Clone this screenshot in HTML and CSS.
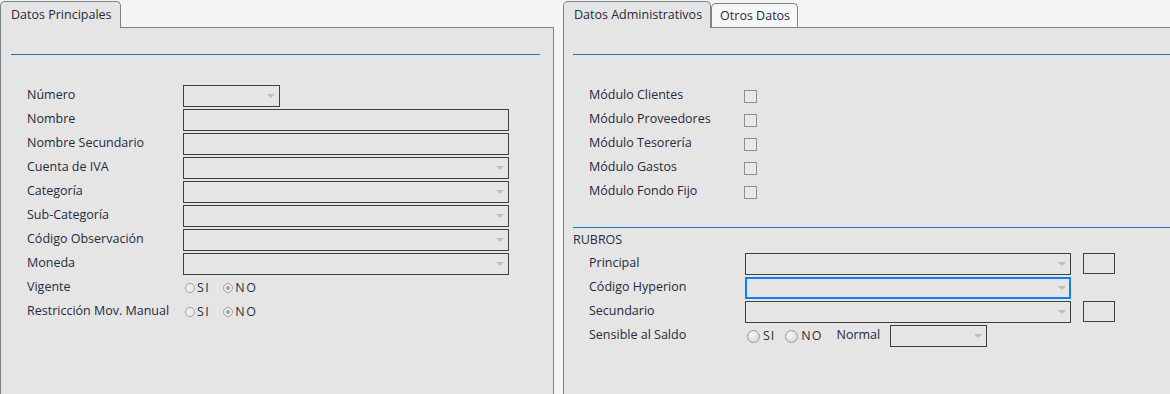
FILE: index.html
```html
<!DOCTYPE html>
<html lang="es">
<head>
<meta charset="utf-8">
<title>Datos</title>
<link rel="stylesheet" href="styles.css">
</head>
<body>
<div class="page">
  <section class="pane pane-left">
    <div class="tabs">
      <div class="tab active">Datos Principales</div>
    </div>
    <div class="panel">
      <div class="rule rule-left"></div>
      <div class="form form-left">
        <span class="label">Número</span>
        <div class="field narrow"><span class="caret"></span></div>
        <span class="label">Nombre</span>
        <div class="field"></div>
        <span class="label">Nombre Secundario</span>
        <div class="field"></div>
        <span class="label">Cuenta de IVA</span>
        <div class="field"><span class="caret"></span></div>
        <span class="label">Categoría</span>
        <div class="field"><span class="caret"></span></div>
        <span class="label">Sub-Categoría</span>
        <div class="field"><span class="caret"></span></div>
        <span class="label">Código Observación</span>
        <div class="field"><span class="caret"></span></div>
        <span class="label">Moneda</span>
        <div class="field"><span class="caret"></span></div>
        <span class="label">Vigente</span>
        <div class="radios">
          <span class="radio"><span class="dot"></span>SI</span>
          <span class="radio"><span class="dot on"></span>NO</span>
        </div>
        <span class="label">Restricción Mov. Manual</span>
        <div class="radios">
          <span class="radio"><span class="dot"></span>SI</span>
          <span class="radio"><span class="dot on"></span>NO</span>
        </div>
      </div>
    </div>
  </section>

  <section class="pane pane-right">
    <div class="tabs">
      <div class="tab active">Datos Administrativos</div>
      <div class="tab inactive">Otros Datos</div>
    </div>
    <div class="panel">
      <div class="rule rule-right"></div>
      <div class="form form-right">
        <span class="label">Módulo Clientes</span>
        <span class="check"></span>
        <span class="label">Módulo Proveedores</span>
        <span class="check"></span>
        <span class="label">Módulo Tesorería</span>
        <span class="check"></span>
        <span class="label">Módulo Gastos</span>
        <span class="check"></span>
        <span class="label">Módulo Fondo Fijo</span>
        <span class="check"></span>
      </div>
      <div class="rule rule-rubros"></div>
      <div class="heading">RUBROS</div>
      <div class="form form-rubros">
        <span class="label">Principal</span>
        <div class="ctrl-row">
          <div class="field"><span class="caret"></span></div>
          <span class="small-box"></span>
        </div>
        <span class="label">Código Hyperion</span>
        <div class="ctrl-row">
          <div class="field focus"><span class="caret"></span></div>
        </div>
        <span class="label">Secundario</span>
        <div class="ctrl-row">
          <div class="field"><span class="caret"></span></div>
          <span class="small-box"></span>
        </div>
        <span class="label">Sensible al Saldo</span>
        <div class="ctrl-row saldo">
          <div class="radios big">
            <span class="radio"><span class="dot big"></span>SI</span>
            <span class="radio"><span class="dot big"></span>NO</span>
          </div>
          <span class="normal">Normal</span>
          <div class="field narrow normal-select"><span class="caret"></span></div>
        </div>
      </div>
    </div>
  </section>
</div>
</body>
</html>
```

FILE: styles.css
```css
* {
  box-sizing: border-box;
}

body {
  margin: 0;
  background: #f4f4f4;
  font-family: "Open Sans", "Noto Sans", sans-serif;
  font-size: 12.5px;
  color: #262a3a;
}

.page {
  display: flex;
  gap: 9px;
  width: 1170px;
  height: 394px;
  overflow: hidden;
}

.pane {
  display: flex;
  flex-direction: column;
}

.pane-left {
  width: 554px;
  flex: none;
}

.pane-right {
  flex: 1;
  min-width: 0;
  margin-right: -2px;
}

.tabs {
  display: flex;
  align-items: flex-end;
  height: 28px;
  border-bottom: 1px solid #7b848b;
  flex: none;
}

.tab {
  border: 1px solid #7b848b;
  border-bottom: none;
  border-radius: 5px 5px 0 0;
  white-space: nowrap;
}

.tab.active {
  height: 27px;
  line-height: 25px;
  padding: 0 8px 0 10px;
  margin-bottom: -1px;
  background: #e5e5e5;
}

.tab.inactive {
  height: 24px;
  line-height: 23px;
  padding: 0 7px 0 8px;
  background: #f6f6f6;
}

.panel {
  flex: 1;
  background: #e5e5e5;
  border-left: 1px solid #7b848b;
  border-right: 1px solid #7b848b;
  display: flex;
  flex-direction: column;
}

.rule {
  height: 1px;
  background: #1f78c8;
  flex: none;
}

.rule-left {
  margin: 26px 13px 0 10px;
}

.rule-right {
  margin: 26px 0 0 9px;
}

.rule-rubros {
  margin: 24px 0 0 9px;
}

.form {
  display: grid;
  grid-auto-rows: 22px;
  row-gap: 2px;
  align-items: center;
  justify-items: start;
}

.form-left {
  grid-template-columns: 156px auto;
  padding-left: 26px;
  margin-top: 30px;
}

.form-right {
  grid-template-columns: 155px auto;
  padding-left: 25px;
  margin-top: 30px;
}

.form-rubros {
  grid-template-columns: 156px auto;
  padding-left: 25px;
}

.label {
  white-space: nowrap;
  line-height: 20px;
  align-self: start;
}

.field {
  width: 326px;
  height: 22px;
  border: 1px solid #3f3f3f;
  display: flex;
  align-items: center;
  justify-content: flex-end;
  padding-right: 4px;
}

.field.narrow {
  width: 97px;
}

.field.focus {
  border: 2px solid #0d80f5;
  padding-right: 3px;
}

.caret {
  width: 0;
  height: 0;
  border-left: 4px solid transparent;
  border-right: 4px solid transparent;
  border-top: 4px solid #bdbdbd;
}

.radios {
  display: flex;
  align-items: center;
  gap: 13px;
  padding-left: 2px;
}

.radio {
  display: flex;
  align-items: center;
  gap: 2px;
  letter-spacing: 1.5px;
  line-height: 18px;
  color: #2a2e44;
}

.dot {
  width: 10px;
  height: 10px;
  border-radius: 50%;
  border: 1px solid #a3a3a3;
  background: #ededed;
  display: flex;
  align-items: center;
  justify-content: center;
}

.dot.on::after {
  content: "";
  width: 4px;
  height: 4px;
  border-radius: 50%;
  background: #9d9d9d;
}

.radios.big {
  gap: 10px;
}

.radios.big .radio {
  gap: 3px;
  letter-spacing: 1px;
}

.dot.big {
  width: 13px;
  height: 13px;
  border-color: #9a9a9a;
  background: radial-gradient(circle at 40% 35%, #f7f7f7 0%, #e2e2e2 55%, #cfcfcf 100%);
}

.check {
  width: 13px;
  height: 13px;
  border: 1px solid #8d8d8d;
  background: #e9e9e9;
}

.heading {
  height: 25px;
  line-height: 24px;
  padding-left: 9px;
  flex: none;
}

.ctrl-row {
  display: flex;
  align-items: flex-start;
  gap: 12px;
}

.small-box {
  width: 32px;
  height: 21px;
  border: 1px solid #3f3f3f;
}

.ctrl-row.saldo {
  align-items: center;
  gap: 0;
}

.normal {
  margin-left: 14px;
  line-height: 20px;
  align-self: flex-start;
}

.normal-select {
  margin-left: 10px;
}
```
